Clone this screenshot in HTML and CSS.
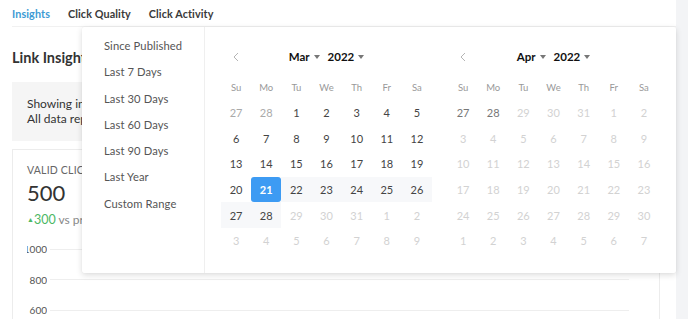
FILE: index.html
```html
<!DOCTYPE html>
<html>
<head>
<meta charset="utf-8">
<link rel="stylesheet" href="styles.css">
</head>
<body>
<div class="page">
  <div class="main">
    <nav class="tabs">
      <span class="tab active">Insights</span>
      <span class="tab">Click Quality</span>
      <span class="tab">Click Activity</span>
    </nav>
    <div class="content">
      <h1 class="title">Link Insights</h1>
      <div class="info">
        <div>Showing insights for the selected date range.</div>
        <div>All data reported in UTC time zone.</div>
      </div>
      <div class="card">
        <div class="metric-label">Valid Clicks</div>
        <div class="metric-value">500</div>
        <div class="metric-delta"><span class="up"><span class="tri">▲</span>300</span> vs previous period</div>
        <div class="chart">
          <div class="grid-row"><div class="axis"><span>1000</span></div><div class="line"></div></div>
          <div class="grid-row"><div class="axis"><span>800</span></div><div class="line"></div></div>
          <div class="grid-row"><div class="axis"><span>600</span></div><div class="line"></div></div>
        </div>
      </div>
    </div>
  </div>
  <div class="side"></div>
</div>

<div class="dropdown">
  <ul class="ranges">
    <li>Since Published</li>
    <li>Last 7 Days</li>
    <li>Last 30 Days</li>
    <li>Last 60 Days</li>
    <li>Last 90 Days</li>
    <li>Last Year</li>
    <li>Custom Range</li>
  </ul>
  <div class="calendars">
    <div class="cal">
      <div class="cal-head">
        <span class="prev"><svg width="6" height="10" viewBox="0 0 6 10"><path d="M5 1 L1 5 L5 9" fill="none" stroke="#b5b5b5" stroke-width="1"/></svg></span>
        <span class="sel">Mar <i class="caret"></i></span>
        <span class="sel">2022 <i class="caret"></i></span>
      </div>
      <div class="days">
        <span class="wd">Su</span><span class="wd">Mo</span><span class="wd">Tu</span><span class="wd">We</span><span class="wd">Th</span><span class="wd">Fr</span><span class="wd">Sa</span>
        <span class="d prev-m">27</span><span class="d prev-m">28</span><span class="d">1</span><span class="d">2</span><span class="d">3</span><span class="d">4</span><span class="d">5</span>
        <span class="d">6</span><span class="d">7</span><span class="d">8</span><span class="d">9</span><span class="d">10</span><span class="d">11</span><span class="d">12</span>
        <span class="d">13</span><span class="d">14</span><span class="d">15</span><span class="d">16</span><span class="d">17</span><span class="d">18</span><span class="d">19</span>
        <span class="d">20</span><span class="d selected">21</span><span class="d range">22</span><span class="d range">23</span><span class="d range">24</span><span class="d range">25</span><span class="d range">26</span>
        <span class="d range">27</span><span class="d range">28</span><span class="d off">29</span><span class="d off">30</span><span class="d off">31</span><span class="d off">1</span><span class="d off">2</span>
        <span class="d off">3</span><span class="d off">4</span><span class="d off">5</span><span class="d off">6</span><span class="d off">7</span><span class="d off">8</span><span class="d off">9</span>
      </div>
    </div>
    <div class="cal">
      <div class="cal-head">
        <span class="prev"><svg width="6" height="10" viewBox="0 0 6 10"><path d="M5 1 L1 5 L5 9" fill="none" stroke="#b5b5b5" stroke-width="1"/></svg></span>
        <span class="sel">Apr <i class="caret"></i></span>
        <span class="sel">2022 <i class="caret"></i></span>
      </div>
      <div class="days">
        <span class="wd">Su</span><span class="wd">Mo</span><span class="wd">Tu</span><span class="wd">We</span><span class="wd">Th</span><span class="wd">Fr</span><span class="wd">Sa</span>
        <span class="d prev-m2">27</span><span class="d prev-m2">28</span><span class="d off">29</span><span class="d off">30</span><span class="d off">31</span><span class="d off">1</span><span class="d off">2</span>
        <span class="d off">3</span><span class="d off">4</span><span class="d off">5</span><span class="d off">6</span><span class="d off">7</span><span class="d off">8</span><span class="d off">9</span>
        <span class="d off">10</span><span class="d off">11</span><span class="d off">12</span><span class="d off">13</span><span class="d off">14</span><span class="d off">15</span><span class="d off">16</span>
        <span class="d off">17</span><span class="d off">18</span><span class="d off">19</span><span class="d off">20</span><span class="d off">21</span><span class="d off">22</span><span class="d off">23</span>
        <span class="d off">24</span><span class="d off">25</span><span class="d off">26</span><span class="d off">27</span><span class="d off">28</span><span class="d off">29</span><span class="d off">30</span>
        <span class="d off">1</span><span class="d off">2</span><span class="d off">3</span><span class="d off">4</span><span class="d off">5</span><span class="d off">6</span><span class="d off">7</span>
      </div>
    </div>
  </div>
</div>
</body>
</html>
```
FILE: styles.css
```css
* { box-sizing: border-box; }
html, body {
  margin: 0;
  padding: 0;
  width: 688px;
  height: 319px;
  overflow: hidden;
  background: #fff;
  font-family: "Lato", "Open Sans", sans-serif;
  color: #333;
}
.page {
  display: flex;
  height: 319px;
}
.main {
  width: 676px;
  flex: none;
}
.side {
  flex: 1;
  background: #f3f4f6;
}
.tabs {
  display: flex;
  gap: 18px;
  height: 27px;
  padding-top: 7px;
  margin-left: 12px;
  border-bottom: 1px solid #f1f1f1;
}
.tab {
  font-size: 10.8px;
  color: #3a3a3a;
  font-weight: 700;
  letter-spacing: 0.1px;
}
.tab.active { color: #3d9ad4; }
.content {
  padding: 0 16px 0 12px;
}
.title {
  margin: 22px 0 0;
  font-size: 14.5px;
  font-weight: 700;
  color: #333;
  line-height: 18px;
}
.info {
  margin-top: 15px;
  height: 59px;
  background: #f5f5f5;
  padding: 14px 15px;
  font-size: 12px;
  line-height: 15px;
  color: #333;
}
.card {
  margin-top: 8px;
  border: 1px solid #ececec;
  border-bottom: none;
  height: 180px;
  padding: 14px 0 0 14px;
  overflow: hidden;
}
.metric-label {
  font-size: 10.5px;
  text-transform: uppercase;
  color: #666;
  letter-spacing: 0.2px;
  line-height: 12px;
}
.metric-value {
  font-size: 22px;
  color: #333;
  margin-top: 6px;
  line-height: 22px;
  font-weight: 400;
}
.metric-delta {
  margin-top: 7px;
  font-size: 12px;
  color: #888;
  line-height: 16px;
}
.up { color: #4cb864; font-size: 12.5px; }
.tri { font-size: 7px; vertical-align: 2px; }
.chart {
  margin-top: 6px;
  padding-right: 30px;
}
.grid-row {
  display: flex;
  align-items: center;
  height: 30.5px;
}
.axis {
  width: 20px;
  display: flex;
  justify-content: flex-end;
  overflow: hidden;
  font-size: 10px;
  color: #555;
  flex: none;
}
.line {
  flex: 1;
  height: 1px;
  background: #eeeeee;
  margin-left: 3px;
}

/* dropdown */
.dropdown {
  position: absolute;
  left: 82px;
  top: 27px;
  width: 594px;
  height: 246px;
  background: #fff;
  box-shadow: 0 2px 6px rgba(0,0,0,0.14), 0 0 1px rgba(0,0,0,0.08);
  border-radius: 2px;
  display: flex;
}
.ranges {
  list-style: none;
  margin: 0;
  padding: 6px 0 0 22px;
  width: 123px;
  border-right: 1px solid #efefef;
  flex: none;
}
.ranges li {
  height: 26.3px;
  line-height: 26.3px;
  font-size: 11.2px;
  color: #555;
  white-space: nowrap;
  letter-spacing: 0.1px;
}
.calendars {
  display: flex;
  gap: 16px;
  padding: 14px 16px 0 16px;
}
.cal {
  width: 211px;
}
.cal-head {
  position: relative;
  height: 30px;
  display: flex;
  justify-content: center;
  align-items: center;
  gap: 8px;
  font-size: 11.5px;
  font-weight: 700;
  color: #111;
}
.prev {
  position: absolute;
  left: 12px;
  top: 11px;
  line-height: 0;
}
.sel {
  display: inline-flex;
  align-items: center;
  gap: 4px;
}
.caret {
  display: inline-block;
  width: 0;
  height: 0;
  border-left: 3.5px solid transparent;
  border-right: 3.5px solid transparent;
  border-top: 4px solid #777;
  margin-top: 1px;
}
.days {
  margin-top: 3px;
  display: grid;
  grid-template-columns: repeat(7, 1fr);
  grid-template-rows: 26px;
  grid-auto-rows: 25.6px;
}
.wd {
  display: flex;
  align-items: center;
  justify-content: center;
  font-size: 9.5px;
  color: #999;
}
.d {
  display: flex;
  align-items: center;
  justify-content: center;
  font-size: 11px;
  color: #444;
}
.d.prev-m { color: #aaa; }
.d.prev-m2 { color: #777; }
.d.off { color: #d2d2d2; }
.d.range { background: #f7f8fa; }
.d.selected {
  background: #3d9bf3;
  color: #fff;
  font-weight: 700;
  border-radius: 3px;
}
```
